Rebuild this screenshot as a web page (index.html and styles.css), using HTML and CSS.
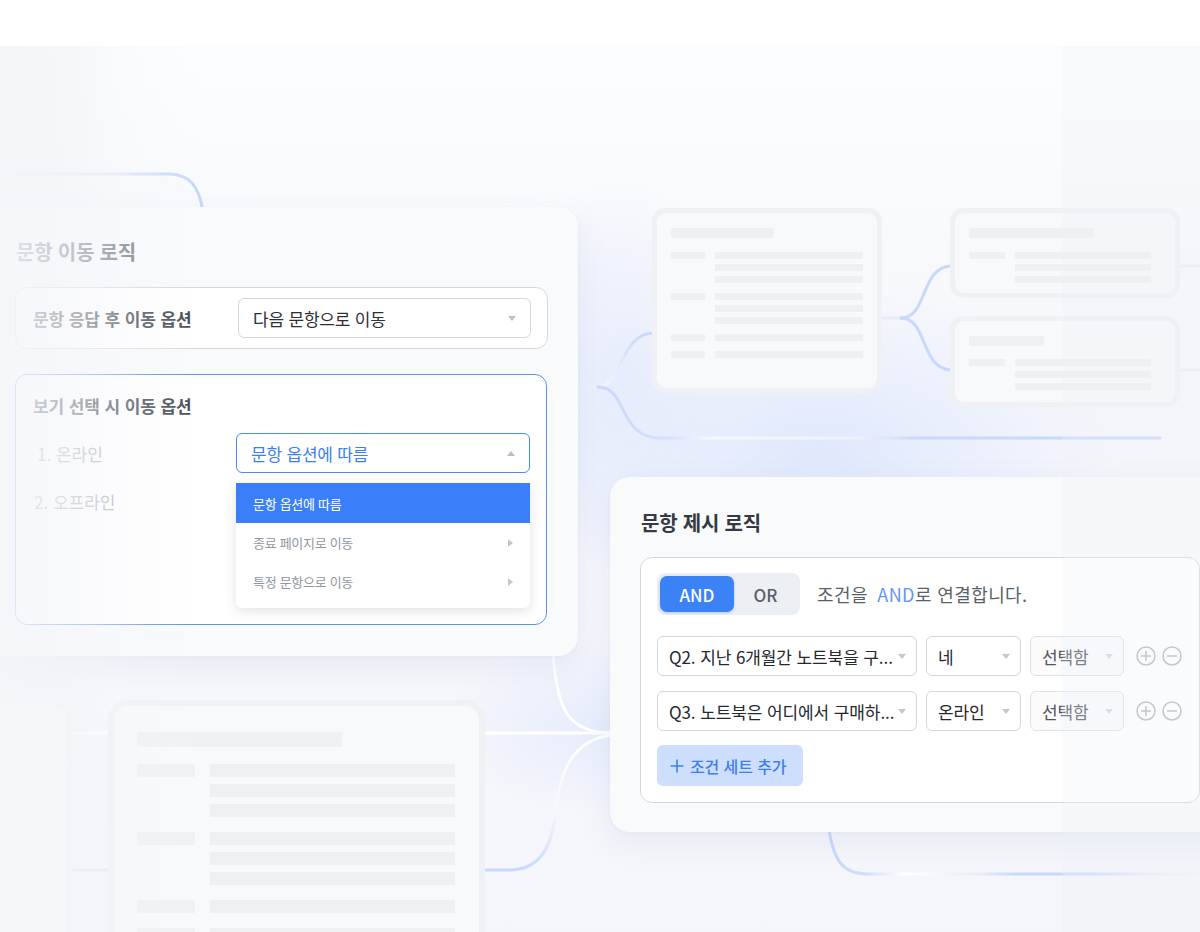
FILE: index.html
```html
<!DOCTYPE html>
<html lang="ko">
<head>
<meta charset="utf-8">
<title>Logic</title>
<link rel="stylesheet" href="styles.css">
</head>
<body>
<div class="stage">
  <div class="canvas"></div>

  <svg class="wires" width="1200" height="932" viewBox="0 0 1200 932">
    <defs>
      <linearGradient id="gTop" gradientUnits="userSpaceOnUse" x1="0" y1="0" x2="205" y2="0">
        <stop offset="0" stop-color="#e7eaf1"/>
        <stop offset="0.55" stop-color="#e3e9f6"/>
        <stop offset="0.8" stop-color="#c9dafc"/>
        <stop offset="1" stop-color="#c6d8fc"/>
      </linearGradient>
      <linearGradient id="gLow" gradientUnits="userSpaceOnUse" x1="600" y1="0" x2="1160" y2="0">
        <stop offset="0" stop-color="#c8d9fc"/>
        <stop offset="0.12" stop-color="#d5e1fb"/>
        <stop offset="0.2" stop-color="#f6f8fc"/>
        <stop offset="0.45" stop-color="#eef1f7"/>
        <stop offset="0.52" stop-color="#dde5f6"/>
        <stop offset="0.56" stop-color="#c9d9fc"/>
        <stop offset="1" stop-color="#c9d9fc"/>
      </linearGradient>
      <linearGradient id="gUp" gradientUnits="userSpaceOnUse" x1="0" y1="387" x2="0" y2="333">
        <stop offset="0" stop-color="#f3f5fa"/>
        <stop offset="0.5" stop-color="#dfe7f8"/>
        <stop offset="1" stop-color="#c9d9fc"/>
      </linearGradient>
      <linearGradient id="gBot" gradientUnits="userSpaceOnUse" x1="830" y1="0" x2="1200" y2="0">
        <stop offset="0" stop-color="#c8d9fc"/>
        <stop offset="0.1" stop-color="#d2defa"/>
        <stop offset="0.2" stop-color="#ffffff"/>
        <stop offset="0.4" stop-color="#e8edf7"/>
        <stop offset="0.5" stop-color="#c9d9fc"/>
        <stop offset="0.7" stop-color="#c9d9fc"/>
        <stop offset="0.85" stop-color="#e9eef7"/>
        <stop offset="1" stop-color="#f2f4f9"/>
      </linearGradient>
      <linearGradient id="gDown" gradientUnits="userSpaceOnUse" x1="0" y1="735" x2="0" y2="870">
        <stop offset="0" stop-color="#ffffff"/>
        <stop offset="0.6" stop-color="#f3f6fc"/>
        <stop offset="1" stop-color="#c9d9fc"/>
      </linearGradient>
    </defs>
    <g fill="none" stroke-width="3" stroke-linecap="round">
      <path d="M0 174 H168 C190 174 199 186 203 212" stroke="url(#gTop)"/>
      <path d="M578 387 H600" stroke="#eef1f8"/>
      <path d="M598 387 C622 387 620 333 654 333" stroke="url(#gUp)"/>
      <path d="M598 387 C628 387 618 438 660 438 H1160" stroke="url(#gLow)"/>
      <path d="M882 318 H903" stroke="#e7ecf6"/>
      <path d="M901 318 C928 318 920 266 952 266" stroke="#c9d9fc"/>
      <path d="M901 318 C928 318 920 370 952 370" stroke="#c9d9fc"/>
      <path d="M1180 266 H1200 M1180 370 H1200" stroke="#eceff5"/>
      <path d="M829 830 C834 860 842 874 868 874 H1200" stroke="url(#gBot)"/>
      <path d="M485 733 H612" stroke="#ffffff"/>
      <path d="M553 650 C556 712 570 733 612 733" stroke="#ffffff"/>
      <path d="M612 735 C572 740 560 772 556 810 C552 850 538 870 509 870 H485" stroke="url(#gDown)"/>
      <path d="M72 733 H110" stroke="#ffffff"/>
      <path d="M72 870 H110" stroke="#dfe6f6"/>
    </g>
  </svg>

  <div class="ghost ghost-sm ghost-a">
    <div class="g-title g-w103"></div>
    <div class="g-group">
      <div class="g-label g-w34"></div>
      <div class="g-vals g-w148"><div></div><div></div><div></div></div>
    </div>
    <div class="g-group">
      <div class="g-label g-w34"></div>
      <div class="g-vals g-w148"><div></div><div></div><div></div></div>
    </div>
    <div class="g-group">
      <div class="g-label g-w34"></div>
      <div class="g-vals g-w148"><div></div></div>
    </div>
    <div class="g-group">
      <div class="g-label g-w34"></div>
      <div class="g-vals g-w148"><div></div></div>
    </div>
  </div>

  <div class="ghost ghost-sm ghost-b">
    <div class="g-title g-w125"></div>
    <div class="g-group">
      <div class="g-label g-w36"></div>
      <div class="g-vals g-w136"><div></div><div></div><div></div></div>
    </div>
  </div>

  <div class="ghost ghost-sm ghost-c">
    <div class="g-title g-w75"></div>
    <div class="g-group">
      <div class="g-label g-w36"></div>
      <div class="g-vals g-w136"><div></div><div></div><div></div></div>
    </div>
  </div>

  <div class="ghost ghost-edge"></div>

  <div class="ghost ghost-lg">
    <div class="g-title"></div>
    <div class="g-group">
      <div class="g-label"></div>
      <div class="g-vals"><div></div><div></div><div></div></div>
    </div>
    <div class="g-group">
      <div class="g-label"></div>
      <div class="g-vals"><div></div><div></div><div></div></div>
    </div>
    <div class="g-group">
      <div class="g-label"></div>
      <div class="g-vals"><div></div></div>
    </div>
    <div class="g-group">
      <div class="g-label"></div>
      <div class="g-vals"><div></div></div>
    </div>
  </div>

  <section class="card move-card">
    <h2 class="card-title">문항 이동 로직</h2>
    <div class="box box-after">
      <span class="box-label">문항 응답 후 이동 옵션</span>
      <div class="select">
        <span>다음 문항으로 이동</span>
        <i class="caret"></i>
      </div>
    </div>
    <div class="box box-choice">
      <h3 class="box-label">보기 선택 시 이동 옵션</h3>
      <div class="choice-row">
        <span class="choice-label">1. 온라인</span>
        <div class="select select-open">
          <span>문항 옵션에 따름</span>
          <i class="caret caret-up"></i>
          <ul class="menu">
            <li class="menu-item active">문항 옵션에 따름</li>
            <li class="menu-item">종료 페이지로 이동<i class="caret-right"></i></li>
            <li class="menu-item">특정 문항으로 이동<i class="caret-right"></i></li>
          </ul>
        </div>
      </div>
      <div class="choice-row">
        <span class="choice-label">2. 오프라인</span>
      </div>
    </div>
  </section>

  <section class="card show-card">
    <h2 class="card-title">문항 제시 로직</h2>
    <div class="cond-box">
      <div class="cond-head">
        <div class="seg">
          <span class="seg-btn on">AND</span>
          <span class="seg-btn">OR</span>
        </div>
        <p class="cond-desc">조건을 <b>AND</b>로 연결합니다.</p>
      </div>
      <div class="cond-row">
        <div class="fsel w-q"><span>Q2. 지난 6개월간 노트북을 구...</span><i class="caret"></i></div>
        <div class="fsel w-a"><span>네</span><i class="caret"></i></div>
        <div class="fsel w-s dim"><span>선택함</span><i class="caret"></i></div>
        <div class="icons">
          <svg width="20" height="20" viewBox="0 0 20 20"><circle cx="10" cy="10" r="9" fill="none" stroke="#b4b8bf" stroke-width="1.5"/><path d="M5 10h10M10 5v10" stroke="#b4b8bf" stroke-width="1.5"/></svg>
          <svg width="20" height="20" viewBox="0 0 20 20"><circle cx="10" cy="10" r="9" fill="none" stroke="#b4b8bf" stroke-width="1.5"/><path d="M5 10h10" stroke="#b4b8bf" stroke-width="1.5"/></svg>
        </div>
      </div>
      <div class="cond-row">
        <div class="fsel w-q"><span>Q3. 노트북은 어디에서 구매하...</span><i class="caret"></i></div>
        <div class="fsel w-a"><span>온라인</span><i class="caret"></i></div>
        <div class="fsel w-s dim"><span>선택함</span><i class="caret"></i></div>
        <div class="icons">
          <svg width="20" height="20" viewBox="0 0 20 20"><circle cx="10" cy="10" r="9" fill="none" stroke="#b4b8bf" stroke-width="1.5"/><path d="M5 10h10M10 5v10" stroke="#b4b8bf" stroke-width="1.5"/></svg>
          <svg width="20" height="20" viewBox="0 0 20 20"><circle cx="10" cy="10" r="9" fill="none" stroke="#b4b8bf" stroke-width="1.5"/><path d="M5 10h10" stroke="#b4b8bf" stroke-width="1.5"/></svg>
        </div>
      </div>
      <button class="add-btn" type="button">
        <svg width="14" height="14" viewBox="0 0 14 14"><path d="M7 0.5v13M0.5 7h13" stroke="#3f80f2" stroke-width="1.6"/></svg>
        <span>조건 세트 추가</span>
      </button>
    </div>
  </section>

  <div class="fade fade-left"></div>
  <div class="fade fade-right"></div>
</div>
</body>
</html>
```

FILE: styles.css
```css
* { box-sizing: border-box; margin: 0; padding: 0; }

body {
  margin: 0;
  background: #ffffff;
  font-family: "Noto Sans CJK KR", "Noto Sans", sans-serif;
}

.stage {
  position: relative;
  width: 1200px;
  height: 932px;
  overflow: hidden;
  background: #ffffff;
}

.canvas {
  position: absolute;
  left: 0;
  top: 46px;
  width: 1200px;
  height: 886px;
  background:
    radial-gradient(ellipse 300px 170px at 820px 410px, rgba(220, 230, 252, 0.9), rgba(220, 230, 252, 0) 100%),
    radial-gradient(ellipse 120px 200px at 620px 330px, rgba(225, 233, 251, 0.7), rgba(225, 233, 251, 0) 100%),
    radial-gradient(ellipse 160px 90px at 600px 680px, rgba(226, 234, 252, 0.8), rgba(226, 234, 252, 0) 100%),
    linear-gradient(to right, #eef0f6 0, rgba(238, 240, 246, 0) 110px),
    linear-gradient(to bottom, #fcfdfe 0, #f7f8fc 250px, #f5f6fb 100%);
}

.wires {
  position: absolute;
  left: 0;
  top: 0;
}

/* ghost diagram nodes */
.ghost {
  position: absolute;
  background: #f8f9fb;
}

.ghost-sm {
  border: 5px solid rgba(236, 238, 243, 0.75);
  border-radius: 14px;
  padding: 15px 14px;
}

.ghost-sm .g-title { height: 10px; background: #eff0f3; border-radius: 2px; }
.ghost-sm .g-group { display: flex; gap: 10px; margin-top: 10px; }
.ghost-sm .g-title + .g-group { margin-top: 14px; }
.ghost-sm .g-label { height: 7px; background: #eff0f3; }
.ghost-sm .g-vals { display: flex; flex-direction: column; gap: 5px; }
.ghost-sm .g-vals div { height: 7px; background: #eff0f3; }

.g-w103 { width: 103px; }
.g-w125 { width: 125px; }
.g-w75 { width: 75px; }
.g-w34 { width: 34px; }
.g-w36 { width: 36px; }
.g-w148 { width: 148px; }
.g-w136 { width: 136px; }

.ghost-a { left: 652px; top: 208px; width: 230px; height: 185px; }
.ghost-b { left: 950px; top: 208px; width: 230px; height: 90px; }
.ghost-c { left: 950px; top: 316px; width: 230px; height: 91px; }
.ghost-c .g-title + .g-group { margin-top: 13px; }

.ghost-lg {
  left: 108px;
  top: 700px;
  width: 377px;
  height: 260px;
  border: 6px solid rgba(236, 238, 243, 0.75);
  border-radius: 20px;
  padding: 26px 23px;
}
.ghost-lg .g-title { width: 205px; height: 15px; background: #f0f1f4; }
.ghost-lg .g-group { display: flex; gap: 15px; margin-top: 15px; }
.ghost-lg .g-title + .g-group { margin-top: 17px; }
.ghost-lg .g-label { width: 58px; height: 13px; background: #f0f1f4; }
.ghost-lg .g-vals { display: flex; flex-direction: column; gap: 7px; width: 245px; }
.ghost-lg .g-vals div { height: 13px; background: #eff0f3; }

.ghost-edge {
  left: -30px;
  top: 698px;
  width: 102px;
  height: 260px;
  border: 6px solid rgba(236, 238, 243, 0.6);
  border-radius: 20px;
  background: #f6f7fa;
}

/* cards */
.card {
  position: absolute;
  border-radius: 20px;
  background: #f9fafc;
  box-shadow: 0 10px 30px rgba(120, 140, 190, 0.12), 0 1px 3px rgba(120, 140, 190, 0.06);
}

.card-title {
  font-size: 20px;
  font-weight: 700;
  line-height: 28px;
  color: #3b4049;
  letter-spacing: -0.2px;
}

.move-card {
  left: -20px;
  top: 207px;
  width: 598px;
  height: 449px;
  padding: 31px 30px 0 35px;
}
.move-card .card-title { padding-left: 1px; color: #6d727b; }

.box {
  background: #ffffff;
  border-radius: 12px;
}

.box-after {
  margin-top: 21px;
  width: 533px;
  height: 62px;
  border: 1px solid #d6d9df;
  display: flex;
  align-items: center;
  justify-content: space-between;
  padding: 0 16px 0 17px;
}

.box-label {
  font-size: 17px;
  font-weight: 700;
  color: #454a53;
  letter-spacing: -0.1px;
}

.select {
  position: relative;
  width: 293px;
  height: 40px;
  border: 1px solid #d3d6dc;
  border-radius: 6px;
  background: #ffffff;
  display: flex;
  align-items: center;
  justify-content: space-between;
  padding: 0 14px 0 14px;
  font-size: 17px;
  color: #2b2f36;
  letter-spacing: -0.2px;
}

.caret {
  display: block;
  width: 0;
  height: 0;
  border-left: 4px solid transparent;
  border-right: 4px solid transparent;
  border-top: 5px solid #bfc3ca;
}
.caret-up {
  border-top: 0;
  border-bottom: 5px solid #b9bdc4;
}

.box-choice {
  margin-top: 25px;
  width: 532px;
  height: 251px;
  border: 1px solid #5d91f0;
  padding: 18px 16px 0 17px;
}

.choice-row {
  display: flex;
  align-items: center;
  justify-content: space-between;
  height: 40px;
  margin-top: 8px;
}
.box-choice .box-label + .choice-row { margin-top: 15px; }

.choice-label {
  font-size: 17px;
  color: #a9adb4;
  padding-left: 4px;
}
.choice-row:last-child .choice-label { padding-left: 1px; }

.select-open {
  width: 294px;
  border-color: #4c89f4;
  color: #3b7ff5;
}

.menu {
  position: absolute;
  left: -1px;
  top: 49px;
  width: 294px;
  list-style: none;
  background: #ffffff;
  border-radius: 0 0 6px 6px;
  box-shadow: 0 3px 12px rgba(40, 50, 80, 0.14);
  padding-bottom: 7px;
  z-index: 2;
}

.menu-item {
  height: 39px;
  display: flex;
  align-items: center;
  justify-content: space-between;
  padding: 0 17px 0 17px;
  font-size: 13px;
  color: #91969e;
  letter-spacing: -0.3px;
}
.menu-item.active {
  height: 40px;
  background: #3a7ff9;
  color: #ffffff;
}

.caret-right {
  display: block;
  width: 0;
  height: 0;
  border-top: 4px solid transparent;
  border-bottom: 4px solid transparent;
  border-left: 5px solid #c3c7cd;
}

/* presentation logic card */
.show-card {
  left: 610px;
  top: 477px;
  width: 630px;
  height: 355px;
  padding: 32px 0 0 30px;
}
.show-card .card-title { padding-left: 1px; color: #343943; }

.cond-box {
  margin-top: 20px;
  width: 560px;
  height: 246px;
  background: #ffffff;
  border: 1px solid #d3d7de;
  border-radius: 12px;
  padding: 15px 0 0 16px;
}

.cond-head {
  display: flex;
  align-items: center;
  gap: 17px;
}

.seg {
  display: flex;
  width: 143px;
  height: 42px;
  padding: 3px;
  background: #eceff4;
  border-radius: 8px;
}

.seg-btn {
  flex: 1;
  display: flex;
  align-items: center;
  justify-content: center;
  font-size: 17px;
  font-weight: 500;
  color: #5b6068;
  border-radius: 7px;
}
.seg-btn.on {
  flex: 0 0 74px;
  background: #3b82f7;
  color: #ffffff;
  box-shadow: 0 1px 3px rgba(40, 90, 200, 0.25);
}

.cond-desc {
  font-size: 18px;
  color: #5a5f67;
  letter-spacing: 0.4px;
}
.cond-desc b {
  font-weight: 400;
  color: #5f96f6;
  margin-left: 4px;
}

.cond-row {
  display: flex;
  align-items: center;
  gap: 9px;
  margin-top: 15px;
}
.cond-head + .cond-row { margin-top: 21px; }

.fsel {
  height: 40px;
  border: 1px solid #d4d7dd;
  border-radius: 6px;
  background: #ffffff;
  display: flex;
  align-items: center;
  justify-content: space-between;
  padding: 0 10px 0 11px;
  font-size: 17px;
  color: #24282f;
  letter-spacing: -0.1px;
  white-space: nowrap;
}
.fsel .caret { flex: none; border-top-color: #c3c7cd; }
.fsel.dim { background: #fbfbfc; border-color: #dfe2e7; color: #4f545c; }
.fsel.dim .caret { border-top-color: #d3d6db; }

.w-q { width: 260px; }
.w-a { width: 95px; }
.w-s { width: 94px; }

.icons {
  display: flex;
  gap: 6px;
  margin-left: 3px;
}
.icons svg { display: block; }

.add-btn {
  margin-top: 14px;
  width: 146px;
  height: 41px;
  border: 0;
  border-radius: 6px;
  background: #cddffd;
  display: flex;
  align-items: center;
  gap: 6px;
  padding: 0 0 0 13px;
  font-family: inherit;
  font-size: 16px;
  font-weight: 500;
  color: #3c7ef0;
  letter-spacing: -0.1px;
}
.add-btn svg { display: block; }

/* edge fades over the illustration */
.fade {
  position: absolute;
  top: 46px;
  height: 886px;
  pointer-events: none;
}
.fade-left {
  left: 0;
  width: 200px;
  background: linear-gradient(to right, rgba(245, 246, 250, 0.9) 0, rgba(245, 246, 250, 0.6) 80px, rgba(245, 246, 250, 0.2) 150px, rgba(245, 246, 250, 0) 200px);
}
.fade-right {
  left: 1062px;
  width: 138px;
  background: rgba(238, 241, 247, 0.28);
}
```
